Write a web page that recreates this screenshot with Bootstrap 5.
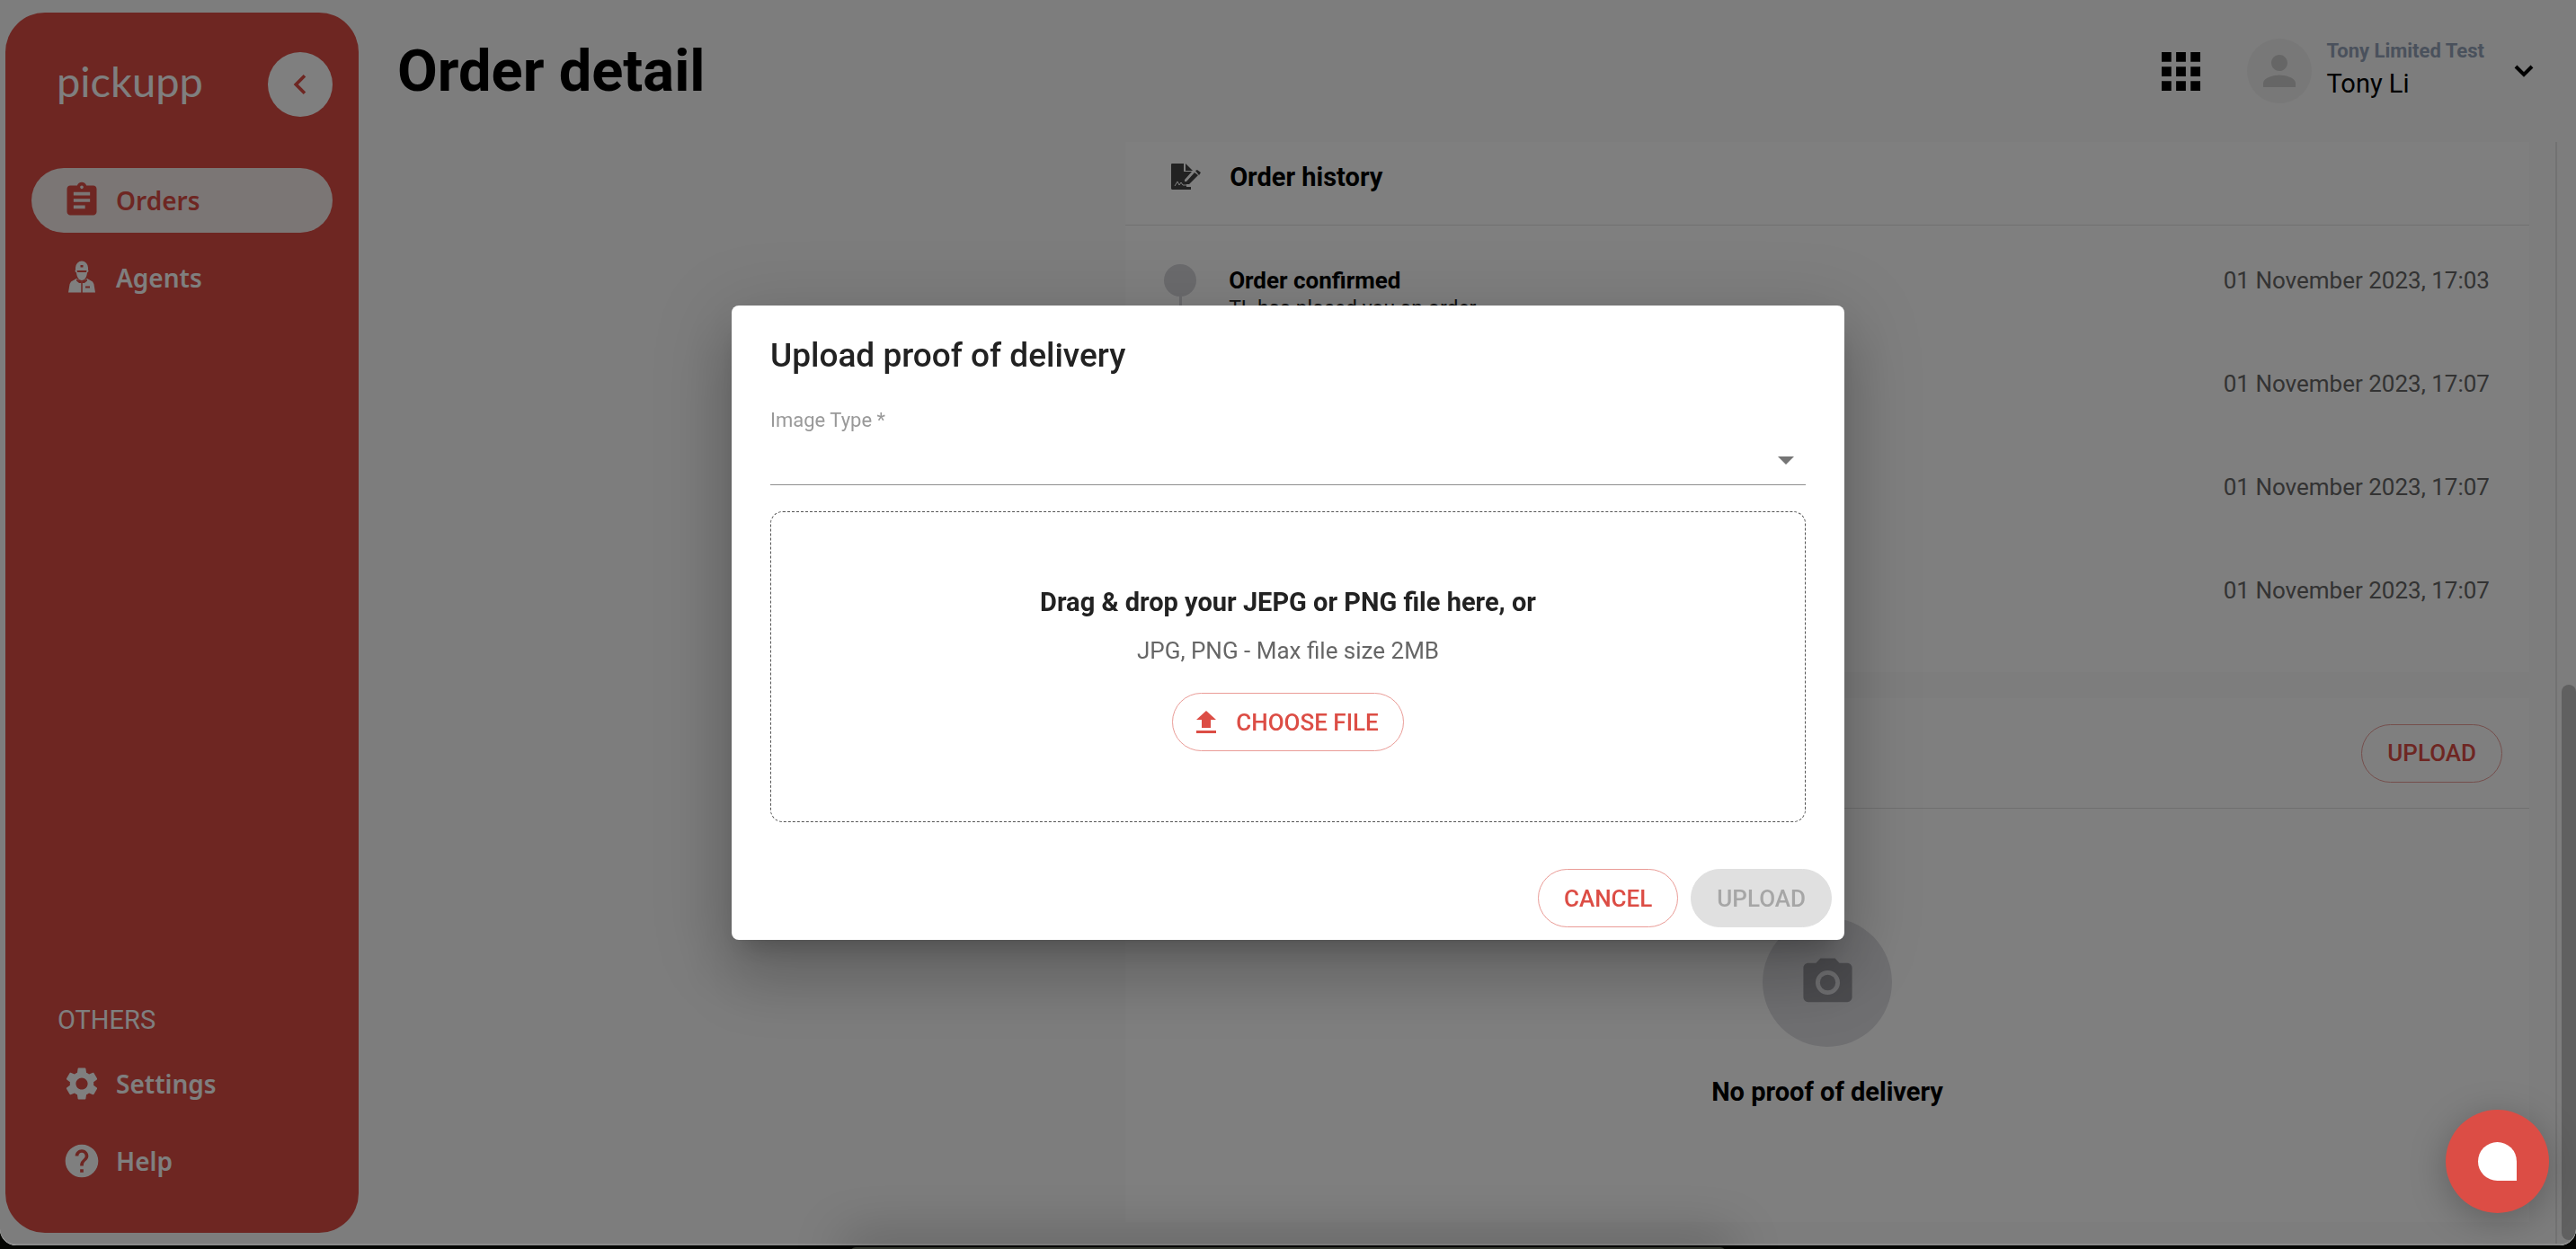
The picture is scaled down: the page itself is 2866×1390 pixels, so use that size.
<!DOCTYPE html>
<html lang="en">
<head>
<meta charset="utf-8">
<meta name="viewport" content="width=device-width, initial-scale=1">
<title>Order detail</title>
<link href="https://cdn.jsdelivr.net/npm/bootstrap@5.3.0/dist/css/bootstrap.min.css" rel="stylesheet">
<style>
  :root { --brand: #dc4d45; --ui: Roboto, "Liberation Sans", sans-serif; --nav: "Noto Sans", "Open Sans", sans-serif; }
  html, body { height: 100%; }
  body { background: #050603; font-family: var(--ui); color: #000; overflow: hidden; font-size: 26px; line-height: 32px; }
  svg { display: block; flex: none; }
  .app-window { height: calc(100vh - 4px); background: #fafafa; border-radius: 0 0 18px 18px; overflow: hidden; position: relative; }
  .app-shell { height: 100%; }

  .side-panel { width: 393px; margin: 14px 0 14px 6px; padding: 44px 29px; border-radius: 44px; background: var(--brand); color: #fff; flex: none; }
  .brand-name { font-family: Lato, sans-serif; font-size: 47px; line-height: 64px; padding: 0 0 8px 28px; color: #fff; text-decoration: none; }
  .collapse-btn { width: 72px; height: 72px; background: #fff; color: var(--brand); border: 0; border-radius: 50%; }
  .side-nav { gap: 14px; }
  .main-nav { margin-top: 57px; }
  .side-link { height: 72px; padding: 0 34px; gap: 16px; border-radius: 36px; color: #fff; font: 600 28px/36px var(--nav); text-decoration: none; }
  .side-link.active { background: #f6eceb; color: var(--brand); }
  .side-heading { font-size: 29px; line-height: 36px; padding-left: 29px; margin: 0 0 17px; font-weight: 400; }

  .top-bar { height: 158px; padding: 0 46px 0 43px; flex: none; }
  .top-title { font-size: 65px; line-height: 80px; font-weight: 700; margin: 0; }
  .app-menu { margin-right: 52px; }
  .avatar { width: 72px; height: 72px; border-radius: 50%; background: #f0f0f0; color: #ccc; }
  .user-lines { gap: 4px; padding-bottom: 4px; margin-right: 32px; }
  .org-name { font-size: 22px; line-height: 28px; font-weight: 700; color: #94a3b8; }
  .user-name { font-size: 29px; line-height: 36px; }
  .plain-btn { background: none; border: 0; padding: 0; color: #000; text-align: left; }

  .scroll-body { flex: 1 1 0; min-height: 0; overflow: hidden; margin-right: 21px; border-right: 2px solid #e4e4e4; padding: 0 29px 26px 29px; }
  .detail-grid { height: 100%; gap: 29px; }
  .left-col { flex: 28 1 0; }
  .right-col { flex: 55 1 0; gap: 29px; }
  .panel { background: #fff; }
  .panel-head { border-bottom: 1px solid #e0e0e0; }
  .panel-title { font-size: 29px; line-height: 36px; font-weight: 700; margin: 0; }
  .history-head { height: 93px; padding: 2px 46px 16px; gap: 32px; }
  .history-list { padding: 43px 44px 0 43px; margin: 0; height: 497px; }
  .history-item { height: 115px; gap: 36px; }
  .step { width: 36px; flex: none; }
  .step-dot { width: 36px; height: 36px; border-radius: 50%; background: #d6d6db; }
  .step-line { width: 3px; flex: 1; background: #d6d6db; }
  .step-title { font-weight: 700; line-height: 36px; }
  .step-note { font-size: 23px; line-height: 28px; color: #222; }
  .step-time { font-size: 26px; line-height: 36px; color: #666; }
  .proof-head { height: 123px; padding: 0 30px; }
  .proof-empty { gap: 32px; padding-bottom: 127px; }
  .empty-icon { width: 144px; height: 144px; border-radius: 50%; background: #dfdfe3; color: #98989e; }

  .pill-btn { height: 65px; padding: 0 28px; border: 1px solid #ea9c97; border-radius: 33px; background: transparent; color: var(--brand); font-size: 26px; font-weight: 500; line-height: 32px; text-transform: uppercase; }
  .pill-btn:disabled { background: #e0e0e0; border-color: #e0e0e0; color: #a6a6a6; }

  .track-thumb { position: absolute; right: 0; top: 55%; bottom: 6px; width: 16px; border-radius: 8px; background: #c0c0c0; }
  .dock-shadow { position: fixed; left: 33%; right: 33%; bottom: -4px; height: 6px; border-radius: 6px 6px 0 0; background: #34372f; box-shadow: 0 0 56px 10px rgba(0,0,0,.3); }
  .dim-layer { position: absolute; inset: 0; background: rgba(0,0,0,.5); border-bottom: 2px solid #8a8a8a; border-radius: 0 0 18px 18px; }

  .upload-layer { position: absolute; inset: 0; }
  .upload-dialog { width: 1238px; max-width: 90%; background: #fff; color: #222; border-radius: 8px; box-shadow: 0 20px 27px -13px rgba(0,0,0,.2), 0 43px 68px 5px rgba(0,0,0,.14), 0 16px 83px 14px rgba(0,0,0,.12); }
  .dialog-main { padding: 32px 43px 0; }
  .dialog-title { font-size: 37px; line-height: 48px; font-weight: 500; margin: 0 0 36px; }
  .field-label { font-size: 22px; line-height: 24px; color: #999; display: block; }
  .type-select { display: block; width: 100%; height: 60px; border: 0; border-bottom: 1px solid #8f8f8f; background: transparent; appearance: none; font-size: 28px; }
  .select-caret { position: absolute; right: 13px; bottom: 23px; color: #757575; pointer-events: none; }
  .drop-zone { height: 346px; margin-top: 29px; border: 1px dashed #555; border-radius: 14px; padding-top: 4px; }
  .drop-title { font-size: 29px; line-height: 36px; font-weight: 700; margin: 0 0 20px; }
  .drop-note { color: #666; margin: 0 0 31px; }
  .choose-btn { gap: 22px; padding: 0 27px 0 26px; }
  .dialog-foot { padding: 52px 14px 14px; gap: 14px; }
  .chat-btn { position: absolute; right: 30px; bottom: 36px; width: 115px; height: 115px; border: 0; border-radius: 50%; background: var(--brand); box-shadow: 0 8px 40px rgba(0,0,0,.25); }
  .chat-shape { width: 43px; height: 43px; background: #fff; border-radius: 50% 50% 0 50%; }
</style>
<script defer src="https://cdn.jsdelivr.net/npm/bootstrap@5.3.0/dist/js/bootstrap.bundle.min.js"></script>
</head>
<body>
<div class="app-window">
  <div class="app-shell d-flex">
    <aside class="side-panel d-flex flex-column">
      <div class="d-flex justify-content-between align-items-center">
        <a class="brand-name" href="#">pickupp</a>
        <button class="collapse-btn d-flex align-items-center justify-content-center" aria-label="Collapse menu">
          <svg width="44" height="44" viewBox="0 0 24 24" fill="currentColor"><path d="M15.41 7.41 14 6l-6 6 6 6 1.410-1.410L10.830 12z"/></svg>
        </button>
      </div>
      <nav class="side-nav main-nav d-flex flex-column">
        <a class="side-link active d-flex align-items-center" href="#">
          <svg width="44" height="44" viewBox="0 0 24 24" fill="currentColor"><path d="M19 3h-4.180C14.400 1.840 13.300 1 12 1s-2.400.840-2.820 2H5c-1.100 0-2 .900-2 2v14c0 1.100.900 2 2 2h14c1.100 0 2-.900 2-2V5c0-1.100-.900-2-2-2m-7 0c.550 0 1 .450 1 1s-.450 1-1 1-1-.450-1-1 .450-1 1-1m2 14H7v-2h7zm3-4H7v-2h10zm0-4H7V7h10z"/></svg>
          Orders
        </a>
        <a class="side-link d-flex align-items-center" href="#">
          <svg width="44" height="44" viewBox="0 0 44 44"><path fill="currentColor" d="M15 13V11a7 7.500 0 0 1 14 0v2l.500 2-1.500 1.500c-.500 5-3 8.500-6 8.500s-5.500-3.500-6-8.500L14.500 15z"/><path fill="currentColor" d="M16 23 10 26.500q-1.500 1.500-2 6L7 38.500h14.500V26zM28 23l6 3.500q1.500 1.500 2 6l1 6H22.500V26z"/><path fill="var(--brand)" d="M16.500 14h11l-.5 2H17zM20.500 8h3v2.500h-3zM16 24l5 1 1 2 1-2 5-1v1.500L25 28h-2l-1-1-1 1h-2l-3-2.500zM21.500 27h1v12h-1zM26 31.500h5v2h-5z"/></svg>
          Agents
        </a>
      </nav>
      <div class="mt-auto">
        <h2 class="side-heading">OTHERS</h2>
        <nav class="side-nav d-flex flex-column">
          <a class="side-link d-flex align-items-center" href="#">
            <svg width="44" height="44" viewBox="0 0 24 24" fill="currentColor"><path d="M19.140 12.940c.040-.300.060-.610.060-.940 0-.320-.020-.640-.070-.940l2.030-1.580c.180-.140.230-.410.120-.610l-1.920-3.320c-.120-.220-.370-.290-.590-.220l-2.390.960c-.500-.380-1.030-.700-1.620-.940l-.360-2.540c-.040-.240-.240-.410-.480-.410h-3.840c-.240 0-.430.170-.470.410l-.360 2.540c-.590.240-1.130.570-1.620.940l-2.390-.960c-.220-.080-.470 0-.590.220L2.740 8.870c-.120.210-.080.470.120.610l2.030 1.580c-.050.300-.090.630-.090.940s.020.640.070.940l-2.030 1.580c-.180.140-.230.410-.120.610l1.920 3.320c.120.220.370.290.590.220l2.390-.960c.500.380 1.030.700 1.620.940l.360 2.540c.050.240.240.410.480.410h3.840c.240 0 .440-.170.470-.410l.360-2.540c.590-.240 1.130-.560 1.620-.940l2.390.960c.220.080.470 0 .590-.220l1.920-3.320c.120-.220.070-.470-.120-.610zM12 15.600c-1.980 0-3.600-1.620-3.600-3.600s1.620-3.600 3.600-3.600 3.600 1.620 3.600 3.600-1.620 3.600-3.600 3.600"/></svg>
            Settings
          </a>
          <a class="side-link d-flex align-items-center" href="#">
            <svg width="44" height="44" viewBox="0 0 24 24" fill="currentColor"><path d="M12 2C6.480 2 2 6.480 2 12s4.480 10 10 10 10-4.480 10-10S17.520 2 12 2m1 17h-2v-2h2zm2.070-7.750-.9.920C13.450 12.900 13 13.500 13 15h-2v-.5c0-1.100.450-2.100 1.170-2.830l1.240-1.260c.370-.360.590-.860.590-1.410 0-1.100-.900-2-2-2s-2 .900-2 2H8c0-2.210 1.790-4 4-4s4 1.790 4 4c0 .880-.360 1.680-.930 2.250"/></svg>
            Help
          </a>
        </nav>
      </div>
    </aside>

    <div class="d-flex flex-column flex-grow-1">
      <header class="top-bar d-flex align-items-center justify-content-between">
        <h1 class="top-title">Order detail</h1>
        <div class="d-flex align-items-center">
          <button class="plain-btn app-menu" aria-label="Apps">
            <svg width="43" height="43" viewBox="4 4 16 16"><path d="M4 8h4V4H4zm6 12h4v-4h-4zm-6 0h4v-4H4zm0-6h4v-4H4zm6 0h4v-4h-4zm6-10v4h4V4zm-6 4h4V4h-4zm6 6h4v-4h-4zm0 6h4v-4h-4z"/></svg>
          </button>
          <button class="plain-btn d-flex align-items-center">
            <span class="avatar d-flex align-items-center justify-content-center me-3">
              <svg width="54" height="54" viewBox="0 0 24 24" fill="currentColor"><path d="M12 12c2.210 0 4-1.790 4-4s-1.790-4-4-4-4 1.790-4 4 1.790 4 4 4m0 2c-2.670 0-8 1.340-8 4v2h16v-2c0-2.660-5.330-4-8-4"/></svg>
            </span>
            <span class="user-lines d-flex flex-column">
              <span class="org-name">Tony Limited Test</span>
              <span class="user-name">Tony Li</span>
            </span>
            <svg width="24" height="24" viewBox="0 0 24 24" fill="none" stroke="#000" stroke-width="4"><path d="m3 7 9 9 9-9"/></svg>
          </button>
        </div>
      </header>

      <main class="scroll-body">
        <div class="detail-grid d-flex">
          <div class="left-col"></div>
          <div class="right-col d-flex flex-column">
            <section class="panel">
              <div class="panel-head history-head d-flex align-items-center">
                <svg width="38" height="38" viewBox="0 0 38 38"><path fill="#444" d="M6 4h13v9h9l-8 9v4H10v5h17v2H7q-2 0-2-2V5q0-1 1-1M21 4l8 8h-8z"/><path fill="#444" d="M5 24h17v9H7q-2 0-2-2z"/><path fill="none" stroke="#fff" d="m9 29 3-5 2 4 2-3 2 3h6"/><path fill="#444" d="m22 24 9-10 4 3-10 10h-4zM32 12l2-1 4 3-2 3zM22 30h5v3h-5z"/></svg>
                <h2 class="panel-title">Order history</h2>
              </div>
              <ul class="history-list list-unstyled">
                <li class="history-item d-flex">
                  <div class="step d-flex flex-column align-items-center"><span class="step-dot"></span><span class="step-line"></span></div>
                  <div class="flex-grow-1"><div class="step-title">Order confirmed</div><div class="step-note">TL has placed you an order.</div></div>
                  <time class="step-time">01 November 2023, 17:03</time>
                </li>
                <li class="history-item d-flex justify-content-end"><time class="step-time">01 November 2023, 17:07</time></li>
                <li class="history-item d-flex justify-content-end"><time class="step-time">01 November 2023, 17:07</time></li>
                <li class="history-item d-flex justify-content-end"><time class="step-time">01 November 2023, 17:07</time></li>
              </ul>
            </section>
            <section class="panel flex-grow-1 d-flex flex-column">
              <div class="panel-head proof-head d-flex align-items-center justify-content-end">
                <button class="pill-btn">Upload</button>
              </div>
              <div class="proof-empty flex-grow-1 d-flex flex-column align-items-center justify-content-end">
                <span class="empty-icon d-flex align-items-center justify-content-center">
                  <svg width="65" height="65" viewBox="0 0 24 24" fill="currentColor"><circle cx="12" cy="12" r="3.200"/><path d="M9 2 7.170 4H4c-1.100 0-2 .900-2 2v12c0 1.100.900 2 2 2h16c1.100 0 2-.900 2-2V6c0-1.100-.900-2-2-2h-3.170L15 2zm3 15c-2.760 0-5-2.240-5-5s2.240-5 5-5 5 2.240 5 5-2.240 5-5 5"/></svg>
                </span>
                <h3 class="panel-title">No proof of delivery</h3>
              </div>
            </section>
          </div>
        </div>
      </main>
    </div>
  </div>
  <span class="track-thumb"></span>
  <div class="dim-layer"></div>
  <div class="dock-shadow"></div>

  <div class="upload-layer d-flex align-items-center justify-content-center">
    <form class="upload-dialog" role="dialog" aria-labelledby="dialog-title">
      <div class="dialog-main">
        <h2 class="dialog-title" id="dialog-title">Upload proof of delivery</h2>
        <div class="position-relative">
          <label class="field-label" for="image-type">Image Type *</label>
          <select class="type-select" id="image-type"><option value=""></option></select>
          <svg class="select-caret" width="18" height="9" viewBox="0 0 18 9" fill="currentColor"><path d="M0 0h18L9 9z"/></svg>
        </div>
        <div class="drop-zone d-flex flex-column align-items-center justify-content-center">
          <p class="drop-title">Drag &amp; drop your JEPG or PNG file here, or</p>
          <p class="drop-note">JPG, PNG - Max file size 2MB</p>
          <button type="button" class="pill-btn choose-btn d-flex align-items-center">
            <svg width="22" height="25" viewBox="0 0 22 25" fill="currentColor"><path d="m11 0 11 10h-6v9H6v-9H0zM0 22h22v3H0z"/></svg>
            Choose file
          </button>
        </div>
      </div>
      <div class="dialog-foot d-flex justify-content-end">
        <button type="button" class="pill-btn">Cancel</button>
        <button type="submit" class="pill-btn" disabled>Upload</button>
      </div>
    </form>
  </div>
  <button class="chat-btn d-flex align-items-center justify-content-center" aria-label="Chat"><span class="chat-shape"></span></button>
</div>
</body>
</html>
